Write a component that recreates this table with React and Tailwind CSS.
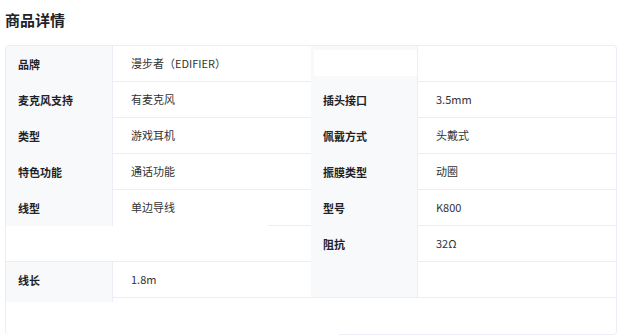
import React from 'react';

const leftRows = [
  { label: '品牌', value: '漫步者（EDIFIER）' },
  { label: '麦克风支持', value: '有麦克风' },
  { label: '类型', value: '游戏耳机' },
  { label: '特色功能', value: '通话功能' },
];

const rightRows = [
  { label: '插头接口', value: '3.5mm' },
  { label: '佩戴方式', value: '头戴式' },
  { label: '振膜类型', value: '动圈' },
  { label: '型号', value: 'K800' },
  { label: '阻抗', value: '32Ω' },
];

const Label = ({ children, className = '' }) => (
  <div className={`w-[107px] shrink-0 border-r border-[#ebeef5] bg-[#f8f9fb] px-3 flex items-center font-bold text-[#1f2329] ${className}`}>
    {children}
  </div>
);

const Row = ({ label, value }) => (
  <div className="flex h-9">
    <Label>{label}</Label>
    <div className="flex-1 border-b border-[#ebeef5] pl-[18px] flex items-center text-[#333]">
      {value}
    </div>
  </div>
);

const App = () => {
  return (
    <div
      className="w-[622px] h-[335px] overflow-hidden bg-white px-[5px] pt-[5px] text-[11px]"
      style={{ fontFamily: '"Noto Sans CJK SC", "Noto Sans", sans-serif' }}
    >
      {/* Title */}
      <div className="h-[30px] mb-[10px] flex items-center text-[15px] font-bold text-[#1f2329]">
        商品详情
      </div>

      {/* Details card */}
      <div className="h-[290px] flex flex-col border-x border-t border-[#ebeef5] rounded-[4px] overflow-hidden">
        <div className="grid grid-cols-2">
          {/* Left column */}
          <div className="flex flex-col">
            {leftRows.map((r) => (
              <Row key={r.label} label={r.label} value={r.value} />
            ))}
            <div className="flex h-9">
              <Label>线型</Label>
              <div className="flex-1 flex flex-col">
                <div className="flex-1 pl-[18px] flex items-center text-[#333]">单边导线</div>
                <div className="h-px w-[43px] self-end bg-[#ebeef5]" />
              </div>
            </div>
            <div className="h-9 border-b border-[#ebeef5]" />
            <div className="flex items-start">
              <Label className="h-[40px] pb-[4px]">线长</Label>
              <div className="flex-1 h-9 border-b border-[#ebeef5] pl-[18px] flex items-center text-[#333]">
                1.8m
              </div>
            </div>
          </div>

          {/* Right column */}
          <div className="flex flex-col">
            <div className="flex h-9">
              <Label className="pl-[3px] pr-0 items-start pt-[4px]">
                <div className="h-[26px] w-full bg-white" />
              </Label>
              <div className="flex-1 border-b border-[#ebeef5]" />
            </div>
            {rightRows.map((r) => (
              <Row key={r.label} label={r.label} value={r.value} />
            ))}
            <div className="flex h-9 border-b border-[#ebeef5]">
              <Label />
              <div className="flex-1" />
            </div>
          </div>
        </div>

        {/* Bottom edge */}
        <div className="flex-1 flex">
          <div className="w-[333px]" />
          <div className="flex-1 border-b border-[#ebeef5] rounded-br-[4px]" />
        </div>
      </div>
    </div>
  );
};

export default App;
